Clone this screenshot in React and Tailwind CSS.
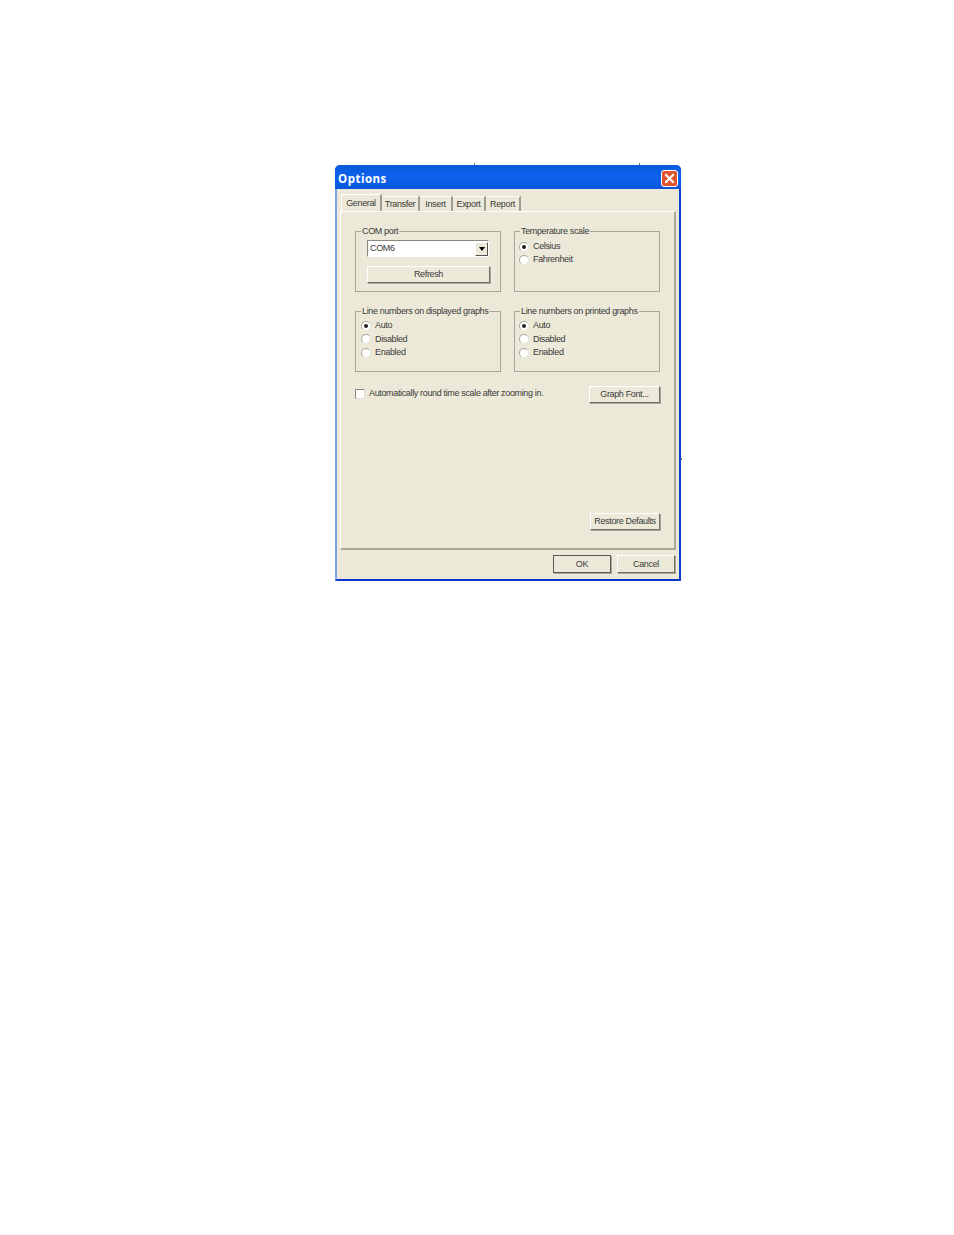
import React from "react";

const font = { fontFamily: '"Liberation Sans", Arial, sans-serif' };

function Radio({ label, checked, className = "h-[13.5px]" }) {
  return (
    <div className={`flex items-center ${className}`}>
      <span className="w-[10px] h-[10px] rounded-full bg-white border border-[#a9a79c] border-r-[#e8e6da] border-b-[#e8e6da] flex items-center justify-center shrink-0">
        {checked && <span className="w-[4px] h-[4px] rounded-full bg-[#222]"></span>}
      </span>
      <span className="ml-[4px]">{label}</span>
    </div>
  );
}

function Group({ title, children }) {
  return (
    <fieldset className="border border-[#a8a79a] min-w-0 h-[66px] px-[6px]">
      <legend className="-ml-[1px] px-[1px] -mb-[1px] leading-[11px] whitespace-nowrap">{title}</legend>
      {children}
    </fieldset>
  );
}

function Btn({ children, className = "" }) {
  return (
    <button className={`bg-[#ece9d8] border border-white border-r-[#716f64] border-b-[#716f64] shadow-[1px_1px_0_#aca899] leading-none ${className}`}>
      {children}
    </button>
  );
}

function Tab({ children, active, className = "" }) {
  return (
    <div
      className={`flex items-center justify-center pt-[2px] border-r-2 border-r-[#9d9c90] ${
        active ? "h-[17px] -mt-[2px] border-l border-t border-white" : "h-[15px] border-t border-white"
      } ${className}`}
    >
      {children}
    </div>
  );
}

export default function App() {
  return (
    <div className="min-h-[1235px] bg-white pt-[165px] pl-[335px] text-[#3a3a3a] text-[9px] tracking-[-0.35px]" style={font}>
      <div className="w-[346px] h-[416px] flex flex-col bg-[#ece9d8] rounded-t-[5px] border-l-2 border-r-2 border-b-2 border-l-[#7ba2e7] border-r-[#0f3fd0] border-b-[#0a35c8] relative">
        <span className="absolute -top-[2px] left-[137px] w-px h-[2px] bg-[#777]"></span>
        <span className="absolute -top-[2px] left-[302px] w-px h-[2px] bg-[#777]"></span>
        <span className="absolute top-[293px] -right-[3px] w-px h-[2px] bg-[#777]"></span>

        <div className="-mx-[2px] h-[24px] shrink-0 rounded-t-[5px] bg-gradient-to-b from-[#0a5ad8] via-[#0b62ee] to-[#0a55dc] flex items-center justify-between pl-[3px] pr-[3px]">
          <span className="text-white font-bold text-[11.5px] tracking-[0.5px] pt-[3px]" style={{ fontFamily: '"Open Sans", sans-serif' }}>
            Options
          </span>
          <span className="w-[17px] h-[17px] mt-[2px] rounded-[3px] bg-[#e0552f] border border-white flex items-center justify-center">
            <svg width="11" height="11" viewBox="0 0 11 11">
              <path d="M2 2 L9 9 M9 2 L2 9" stroke="#fff" strokeWidth="2" strokeLinecap="square" />
            </svg>
          </span>
        </div>

        <div className="flex h-[15px] mt-[7px] ml-[4px] items-end shrink-0">
          <Tab active className="w-[41px]">General</Tab>
          <Tab className="w-[38px]">Transfer</Tab>
          <Tab className="w-[33px]">Insert</Tab>
          <Tab className="w-[33px]">Export</Tab>
          <Tab className="w-[35px]">Report</Tab>
        </div>

        <div className="ml-[3px] w-[336px] h-[339px] shrink-0 border-t border-l border-white border-r-2 border-b-2 border-r-[#aca899] border-b-[#aca899] px-[14px] pt-[14px] flex flex-col">
          <div className="grid grid-cols-[146px_146px] gap-x-[13px] gap-y-[14px]">
            <Group title="COM port">
              <div className="mt-[4px] ml-[5px] w-[122px] h-[17px] bg-white border border-[#8a887c] border-r-white border-b-white flex items-center justify-between pl-[2px]">
                <span>COM6</span>
                <span className="w-[13px] h-[14px] bg-[#ece9d8] border border-white border-r-[#555] border-b-[#555] flex items-center justify-center">
                  <span className="w-0 h-0 border-x-[3.5px] border-x-transparent border-t-[4px] border-t-black"></span>
                </span>
              </div>
              <Btn className="mt-[9px] ml-[5px] w-[123px] h-[17px] block">Refresh</Btn>
            </Group>
            <Group title="Temperature scale">
              <div className="mt-[4px] ml-[-2px]">
                <Radio label="Celsius" checked className="h-[13px]" />
                <Radio label="Fahrenheit" className="h-[13px]" />
              </div>
            </Group>
            <Group title="Line numbers on displayed graphs">
              <div className="mt-[3px] ml-[-1px]">
                <Radio label="Auto" checked />
                <Radio label="Disabled" />
                <Radio label="Enabled" />
              </div>
            </Group>
            <Group title="Line numbers on printed graphs">
              <div className="mt-[3px] ml-[-2px]">
                <Radio label="Auto" checked />
                <Radio label="Disabled" />
                <Radio label="Enabled" />
              </div>
            </Group>
          </div>

          <div className="flex items-start justify-between mt-[14px]">
            <div className="flex items-center h-[13px] mt-[1px]">
              <span className="w-[10px] h-[10px] bg-white border border-[#8a887c] border-r-[#ddd] border-b-[#ddd]"></span>
              <span className="ml-[4px]">Automatically round time scale after zooming in.</span>
            </div>
            <Btn className="w-[71px] h-[17px]">Graph Font...</Btn>
          </div>

          <div className="flex justify-end mt-[110px]">
            <Btn className="w-[70px] h-[17px] whitespace-nowrap">Restore Defaults</Btn>
          </div>
        </div>

        <div className="flex justify-end gap-[6px] mt-[5px] mr-[4px]">
          <Btn className="w-[58px] h-[18px] outline outline-[#5c5b52] -outline-offset-1">OK</Btn>
          <Btn className="w-[58px] h-[18px]">Cancel</Btn>
        </div>
      </div>
    </div>
  );
}
